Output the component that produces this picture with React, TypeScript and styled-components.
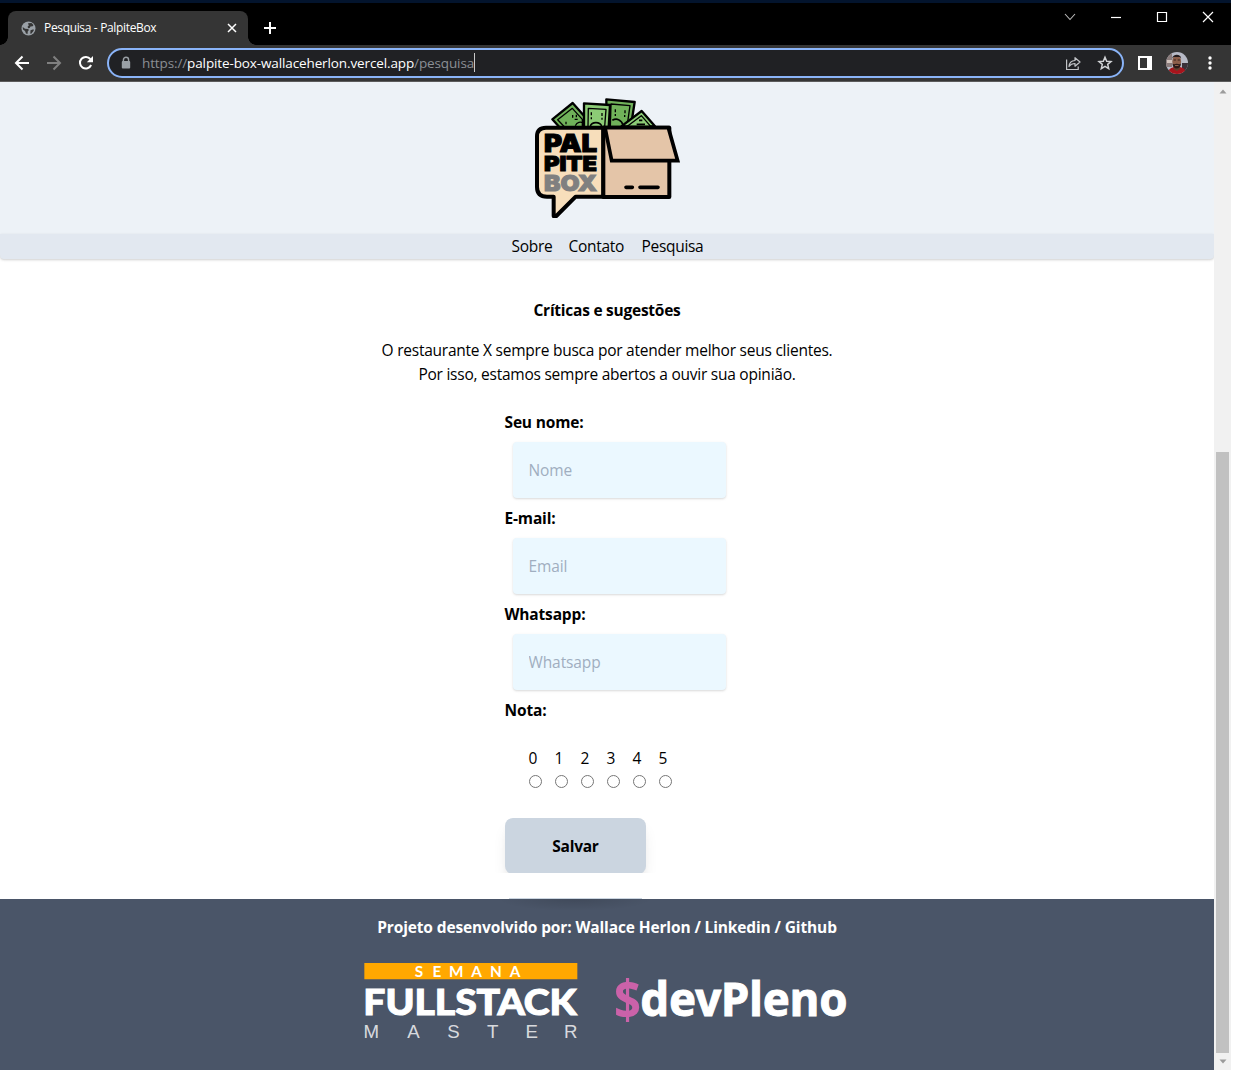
import React from "react";
import styled, { createGlobalStyle } from "styled-components";

const GlobalStyle = createGlobalStyle`
  *, *::before, *::after { box-sizing: border-box; }
  body {
    margin: 0;
    background: #fff;
    color: #000;
    font-family: "Open Sans", "Noto Sans", sans-serif;
  }
`;

/* ---------- Browser chrome ---------- */

const Window = styled.div`
  width: 1231px;
  height: 1070px;
  display: flex;
  flex-direction: column;
  overflow: hidden;
`;

const TitleBar = styled.div`
  height: 45px;
  flex: none;
  display: flex;
  padding: 8px 14px 0 8px;
  border-top: 3px solid #03142d;
  background: #000;
  color: #fff;
`;

const Tab = styled.div`
  position: relative;
  width: 240px;
  height: 34px;
  display: flex;
  align-items: center;
  padding: 0 11px 0 13px;
  border-radius: 8px 8px 0 0;
  background: #353535;

  &::before,
  &::after {
    content: "";
    position: absolute;
    bottom: 0;
    width: 8px;
    height: 8px;
  }
  &::before {
    left: -8px;
    background: radial-gradient(circle at 0 0, #000 7.5px, #353535 8px);
  }
  &::after {
    right: -8px;
    background: radial-gradient(circle at 100% 0, #000 7.5px, #353535 8px);
  }
`;

const TabTitle = styled.span`
  flex: 1;
  margin-left: 8px;
  font-size: 12px;
  letter-spacing: -0.34px;
  line-height: 16px;
  white-space: nowrap;
`;

const NewTab = styled.div`
  display: flex;
  align-items: center;
  height: 34px;
  margin-left: 15px;
`;

const WindowControls = styled.div`
  display: flex;
  gap: 30px;
  margin: -2px 1px 0 auto;
  height: 16px;
`;

const Toolbar = styled.div`
  height: 37px;
  flex: none;
  display: flex;
  align-items: center;
  padding: 0 13px 0 14px;
  border-bottom: 1px solid #5c5c5c;
  background: #353535;
`;

const NavButtons = styled.div`
  display: flex;
  gap: 16px;
  margin-right: 13px;
`;

const AddressBar = styled.div`
  width: 1017px;
  height: 30px;
  display: flex;
  align-items: center;
  padding: 0 9px 0 11px;
  border: 2px solid #8ab4f8;
  border-radius: 15px;
  background: #202124;
`;

const Url = styled.div`
  display: flex;
  align-items: center;
  margin: 0 auto 0 10px;
  font-size: 13.5px;
  letter-spacing: -0.12px;
  line-height: 18px;
  white-space: nowrap;
  color: #8b8f94;
`;

const Host = styled.span`
  color: #fff;
`;

const Caret = styled.i`
  width: 1px;
  height: 19px;
  margin-top: -2px;
  background: #c8c8c8;
`;

const AddressActions = styled.div`
  display: flex;
  gap: 16px;
`;

const ToolbarActions = styled.div`
  display: flex;
  align-items: center;
  margin-left: auto;
  gap: 14px;
`;

/* ---------- Page ---------- */

const Viewport = styled.div`
  flex: 1;
  min-height: 0;
  display: flex;
`;

const Page = styled.div`
  width: 1214px;
  display: flex;
  flex-direction: column;
  font-size: 15.5px;
  font-weight: 370;
  line-height: 24px;
  letter-spacing: -0.16px;
`;

const Header = styled.header`
  height: 152px;
  flex: none;
  padding-top: 16px;
  display: flex;
  justify-content: center;
  background: #edf2f7;
`;

const Nav = styled.nav`
  height: 25px;
  flex: none;
  display: flex;
  justify-content: center;
  gap: 16px;
  border-radius: 0 0 4px 4px;
  background: #e2e8f0;
  box-shadow: 0 1px 3px rgba(0, 0, 0, 0.12), 0 1px 2px rgba(0, 0, 0, 0.08);
`;

const NavLink = styled.a<{ $width: number }>`
  width: ${(p) => p.$width}px;
  white-space: nowrap;
  letter-spacing: -0.3px;
`;

const Main = styled.main`
  height: 640px;
  flex: none;
  display: flex;
  flex-direction: column;
  align-items: center;
  padding-top: 39px;
`;

const Title = styled.h1`
  margin: 0 0 16px;
  font-size: inherit;
  font-weight: 700;
  letter-spacing: -0.25px;
`;

const Intro = styled.p`
  margin: 0 0 24px;
  text-align: center;
  letter-spacing: -0.24px;
`;

const Form = styled.form`
  width: 205px;
  display: flex;
  flex-direction: column;
`;

const Label = styled.label`
  height: 24px;
  font-weight: 700;
`;

const Input = styled.input`
  width: 213.5px;
  height: 56px;
  flex: none;
  margin: 8px;
  padding: 16px;
  border: 0;
  border-radius: 4px;
  background: #ebf8ff;
  box-shadow: 0 1px 3px rgba(0, 0, 0, 0.1), 0 1px 2px rgba(0, 0, 0, 0.06);
  font: inherit;
  font-weight: 400;
  letter-spacing: -0.1px;

  &::placeholder {
    color: #a0aec0;
    opacity: 1;
  }
`;

const Scores = styled.div`
  display: flex;
  gap: 13px;
  margin: 24px 0 0 24px;
`;

const Score = styled.label`
  width: 13px;
  display: flex;
  flex-direction: column;

  input {
    width: 13px;
    height: 13px;
    margin: 5px 0 0;
  }
`;

const SaveArea = styled.div`
  height: 75px;
  margin: 10px -20px 0;
  padding: 20px 20px 0;
  overflow: hidden;
`;

const SaveButton = styled.button`
  width: 141px;
  height: 56px;
  padding: 0 0 0 1px;
  border: 0;
  border-radius: 8px;
  background: #cbd5e0;
  box-shadow: 0 10px 15px -3px rgba(0, 0, 0, 0.1), 0 4px 6px -2px rgba(0, 0, 0, 0.05);
  color: #000;
  font: inherit;
  font-weight: 700;
  letter-spacing: -0.25px;
`;

const ButtonEdge = styled.div`
  width: 133px;
  height: 1px;
  margin: 25px 0 0 4px;
  background: #cbd5e0;
`;

const Footer = styled.footer`
  flex: 1;
  display: flex;
  flex-direction: column;
  align-items: center;
  padding-top: 16px;
  background:
    radial-gradient(ellipse 78px 12px at 575px 0, rgba(0, 0, 0, 0.13), transparent) no-repeat,
    #4a5568;
  color: #fff;
`;

const Credits = styled.div`
  font-weight: 700;
  letter-spacing: -0.13px;
  white-space: nowrap;
`;

const Sponsors = styled.div`
  width: 484px;
  display: flex;
  justify-content: space-between;
  align-items: flex-start;
  margin: 24px 0 0 -3px;
`;

const LogoSvg = styled.svg<{ $drop?: number }>`
  margin-top: ${(p) => p.$drop ?? 0}px;
  overflow: visible;
`;

const Scrollbar = styled.div`
  width: 17px;
  display: flex;
  flex-direction: column;
  align-items: center;
  padding: 7px 0 6px;
  background: #f1f1f1;
`;

const Thumb = styled.div`
  width: 13px;
  height: 601px;
  margin: auto 0 6px;
  background: #c1c1c1;
`;

/* ---------- Drawings ---------- */

const GlobeIcon = () => (
  <svg width="15" height="15" viewBox="0 0 15 15">
    <circle cx="7.5" cy="7.5" r="7" fill="#9aa0a6" />
    <path d="M1.7 6 4 7.8l3 .2 1 1-1.2 1.2-.3 2.8-1.5-.4-1-2.6L2 8.5zM7 2.2l3.5-.2 2 2-.8 1.2-2.2.3-.8 1.6-1.5.2L6.5 5.8l1.3-1.3zM9.5 9.2l3-1 .3 1.3-2.3 3-1.2.2z" fill="#353535" />
  </svg>
);

const TabCloseIcon = () => (
  <svg width="10" height="10" viewBox="0 0 10 10" stroke="#fff" strokeWidth="1.5">
    <path d="m1 1 8 8M9 1 1 9" />
  </svg>
);

const PlusIcon = () => (
  <svg width="14" height="14" viewBox="0 0 14 14" stroke="#fff" strokeWidth="2">
    <path d="M7 1v12M1 7h12" />
  </svg>
);

const ControlIcon = ({ d, thin }: { d: string; thin?: boolean }) => (
  <svg width="16" height="16" viewBox="0 0 16 16" fill="none" stroke={thin ? "#bbb" : "#fff"} strokeWidth={thin ? 1.1 : 1.2}>
    <path d={d} />
  </svg>
);

const NavIcon = ({ d, color = "#fff" }: { d: string; color?: string }) => (
  <svg width="16" height="16" viewBox="0 0 16 16" fill="none" stroke={color} strokeWidth="2">
    <path d={d} />
  </svg>
);

const ReloadIcon = () => (
  <svg width="16" height="16" viewBox="0 0 16 16">
    <path d="M13.1 10A5.8 5.8 0 1 1 12.4 4.2" fill="none" stroke="#fff" strokeWidth="2" />
    <path d="M15 1v6.2H8.8z" fill="#fff" />
  </svg>
);

const LockIcon = () => (
  <svg width="12" height="14" viewBox="0 0 12 14">
    <path d="M3.4 6V3.9a2.6 2.6 0 0 1 5.2 0V6" fill="none" stroke="#9aa0a6" strokeWidth="1.4" />
    <rect x="1.8" y="5" width="8.4" height="7.6" rx="1" fill="#9aa0a6" />
  </svg>
);

const ShareIcon = () => (
  <svg width="16" height="16" viewBox="0 0 16 16" fill="none" stroke="#c2c4c7" strokeWidth="1.2">
    <path d="M1.6 4.5v10h11.6v-3" />
    <path d="M4 11.5c.3-3.8 2.4-5.8 6-6V2.7L15 7l-5 4.2V8.5c-2.8 0-4.5.8-6 3z" strokeLinejoin="round" />
  </svg>
);

const StarIcon = () => (
  <svg width="16" height="16" viewBox="0 0 16 16">
    <path d="m8 2.2 1.7 4 4.3.4-3.3 2.8 1 4.3L8 11.4l-3.7 2.3 1-4.3L2 6.6l4.3-.4z" fill="none" stroke="#d0d2d5" strokeWidth="1.5" />
  </svg>
);

const PanelIcon = () => (
  <svg width="14" height="14" viewBox="0 0 14 14">
    <path d="M0 0h14v14H0zM2 2v10h7V2z" fill="#fff" fillRule="evenodd" />
  </svg>
);

const Avatar = () => (
  <svg width="22" height="22" viewBox="0 0 22 22">
    <defs>
      <clipPath id="avatar">
        <circle cx="11" cy="11" r="11" />
      </clipPath>
    </defs>
    <g clipPath="url(#avatar)">
      <path d="M0 0h22v22H0z" fill="#b7bac6" />
      <path d="M0 0h6v15H0z" fill="#8a7c7c" />
      <path d="M1 8h5v3H1z" fill="#d2c4bd" />
      <path d="M16 11h6v8h-6z" fill="#3a3038" />
      <path d="M2 22c0-5 3-6 6-7h6c4 1 6 3 6 7z" fill="#a8141c" />
      <path d="M7.5 12h6.5v5l-3 2-3.5-2z" fill="#65402f" />
      <ellipse cx="10.7" cy="9.5" rx="4.4" ry="6.4" fill="#8c5e49" />
      <path d="M6.3 6.5C6.5 1.5 15 1.5 15.2 6.5L13.8 5H7.7z" fill="#251c1d" />
      <path d="M6.5 11.5c1.5 1.3 2.4.3 4.2.3s2.7 1 4.2-.3c0 3.3-2 5-4.2 5s-4.2-1.7-4.2-5z" fill="#2c1a18" />
      <path d="M9 13.5h3.5" stroke="#8c5e49" />
      <path d="M7.7 8h2.2M11.7 8h2.2" stroke="#33211d" strokeWidth="1" />
    </g>
  </svg>
);

const MenuDots = () => (
  <svg width="16" height="16" viewBox="0 0 16 16" fill="#fff">
    <circle cx="8" cy="3" r="1.7" />
    <circle cx="8" cy="8" r="1.7" />
    <circle cx="8" cy="13" r="1.7" />
  </svg>
);

const PalpiteBoxLogo = () => (
  <svg width="145" height="120" viewBox="45 39 435 360" role="img" aria-label="PalpiteBox">
    <g stroke="#000" strokeWidth="7" strokeLinejoin="round">
      <path d="m97 103 61-49 38 43v31h-76z" fill="#70b25a" />
      <path d="m113 104 44-34 30 33v22h-54z" fill="#70b25a" strokeWidth="4" />
      <path d="m259 43 85 8-12 78h-72z" fill="#70b25a" />
      <path d="m273 57 57 5-9 63h-50z" fill="#70b25a" strokeWidth="4" />
      <path d="m192 55 78 5-4 68h-74z" fill="#8ccc76" />
      <path d="m205 70 53 3-4 52h-50z" fill="#8ccc76" strokeWidth="4" />
      <path d="m304 124 61-46 40 46z" fill="#8ccc76" />
      <path d="m322 124 42-32 28 32z" fill="#8ccc76" strokeWidth="4" />
    </g>
    <g fill="none" stroke="#000" strokeWidth="4">
      <path d="M138 110v8M158 90v8M169 89v8M164 103h9M166 122c5-12 16-12 23-9M214 82v9M214 97v6M246 84v9M246 98v6M286 73v9M286 87v6M315 76v9M314 90v6" />
      <path d="M211 123c5-13 28-14 34 0M277 106c12-7 27-3 32 14M350 118h25M357 106h10" strokeWidth="5" />
    </g>
    <path d="M250 128H78c-17 0-27 9-27 26v152c0 18 10 29 30 29h20v57c0 3 5 4 8 1l58-58h83z" fill="#f7debb" stroke="#000" strokeWidth="12" strokeLinejoin="round" />
    <path d="M250 128h198v208H250z" fill="#e4c5a8" stroke="#000" strokeWidth="12" strokeLinejoin="round" />
    <path d="M255 128h190l28 99H275z" fill="#e4c5a8" stroke="#000" strokeWidth="11" />
    <path d="M318 307h19M360 307h54" fill="none" stroke="#000" strokeWidth="11" strokeLinecap="round" />
    <g fontFamily="Inter, 'Open Sans', sans-serif" fontWeight="900" strokeWidth="3">
      <text x="72" y="200" fontSize="72" textLength="159" lengthAdjust="spacingAndGlyphs" stroke="#000">PAL</text>
      <text x="72" y="258" fontSize="61" textLength="159" lengthAdjust="spacingAndGlyphs" stroke="#000">PITE</text>
      <text x="72" y="318" fontSize="66" textLength="159" lengthAdjust="spacingAndGlyphs" fill="#808080" stroke="#808080">BOX</text>
    </g>
  </svg>
);

const FullstackLogo = () => (
  <LogoSvg width="214" height="77" viewBox="27 219 642 231" fill="#fff" fontFamily="Lato, sans-serif" role="img" aria-label="Semana Fullstack Master">
    <path d="M28 219h639v49H28z" fill="#ffa800" />
    <text x="192 246 304 365 423 480" y="261" fontSize="46" fontWeight="700" textAnchor="middle">SEMANA</text>
    <text x="25" y="375" fontSize="108" fontWeight="900" textLength="640" lengthAdjust="spacingAndGlyphs" stroke="#fff" strokeWidth="3">FULLSTACK</text>
    <text x="49 175 295 413 530 647" y="443" fontSize="56" fontWeight="300" textAnchor="middle" fontFamily="'Liberation Sans', sans-serif" fillOpacity="0.8">MASTER</text>
  </LogoSvg>
);

const DevPlenoLogo = () => (
  <LogoSvg $drop={14} width="233" height="46" viewBox="43 80 699 138" fontFamily="'Noto Sans', sans-serif" fontWeight="700" role="img" aria-label="devPleno">
    <text x="40" y="206" fontSize="162" fill="#cb62a9" textLength="81" lengthAdjust="spacingAndGlyphs">$</text>
    <text x="119" y="197" fontSize="140" fill="#fff" stroke="#fff" strokeWidth="3" textLength="622" lengthAdjust="spacingAndGlyphs">devPleno</text>
  </LogoSvg>
);

const ScrollArrow = ({ down }: { down?: boolean }) => (
  <svg width="8" height="5" viewBox="0 0 8 5">
    <path d={down ? "M.5.5h7L4 4.5z" : "M.5 4.5h7L4 .5z"} fill="#9b9b9b" />
  </svg>
);

const fields = [
  { label: "Seu nome:", placeholder: "Nome" },
  { label: "E-mail:", placeholder: "Email" },
  { label: "Whatsapp:", placeholder: "Whatsapp" },
];

const links = [
  { text: "Sobre", width: 41 },
  { text: "Contato", width: 57 },
  { text: "Pesquisa", width: 61 },
];

export default function App() {
  return (
    <Window>
      <GlobalStyle />
      <TitleBar>
        <Tab>
          <GlobeIcon />
          <TabTitle>Pesquisa - PalpiteBox</TabTitle>
          <TabCloseIcon />
        </Tab>
        <NewTab>
          <PlusIcon />
        </NewTab>
        <WindowControls>
          <ControlIcon d="m3 5 5 5.5L13 5" thin />
          <ControlIcon d="M3 8.5h10" />
          <ControlIcon d="M3.5 3.5h9v9h-9z" />
          <ControlIcon d="m3 3 10 10M13 3 3 13" />
        </WindowControls>
      </TitleBar>
      <Toolbar>
        <NavButtons>
          <NavIcon d="M15 8H2.5M8.5 1.5 2 8l6.5 6.5" />
          <NavIcon d="M1 8h12.5M7.5 1.5 14 8l-6.5 6.5" color="#808080" />
          <ReloadIcon />
        </NavButtons>
        <AddressBar>
          <LockIcon />
          <Url>
            https://<Host>palpite-box-wallaceherlon.vercel.app</Host>/pesquisa
            <Caret />
          </Url>
          <AddressActions>
            <ShareIcon />
            <StarIcon />
          </AddressActions>
        </AddressBar>
        <ToolbarActions>
          <PanelIcon />
          <Avatar />
          <MenuDots />
        </ToolbarActions>
      </Toolbar>
      <Viewport>
        <Page>
          <Header>
            <PalpiteBoxLogo />
          </Header>
          <Nav>
            {links.map((link) => (
              <NavLink key={link.text} $width={link.width}>{link.text}</NavLink>
            ))}
          </Nav>
          <Main>
            <Title>Críticas e sugestões</Title>
            <Intro>
              O restaurante X sempre busca por atender melhor seus clientes.
              <br />
              Por isso, estamos sempre abertos a ouvir sua opinião.
            </Intro>
            <Form>
              {fields.map((field) => (
                <React.Fragment key={field.label}>
                  <Label>{field.label}</Label>
                  <Input type="text" placeholder={field.placeholder} />
                </React.Fragment>
              ))}
              <Label>Nota:</Label>
              <Scores>
                {[0, 1, 2, 3, 4, 5].map((n) => (
                  <Score key={n}>
                    {n}
                    <input type="radio" name="nota" />
                  </Score>
                ))}
              </Scores>
              <SaveArea>
                <SaveButton type="button">Salvar</SaveButton>
              </SaveArea>
              <ButtonEdge />
            </Form>
          </Main>
          <Footer>
            <Credits>Projeto desenvolvido por: Wallace Herlon / Linkedin / Github</Credits>
            <Sponsors>
              <FullstackLogo />
              <DevPlenoLogo />
            </Sponsors>
          </Footer>
        </Page>
        <Scrollbar>
          <ScrollArrow />
          <Thumb />
          <ScrollArrow down />
        </Scrollbar>
      </Viewport>
    </Window>
  );
}
